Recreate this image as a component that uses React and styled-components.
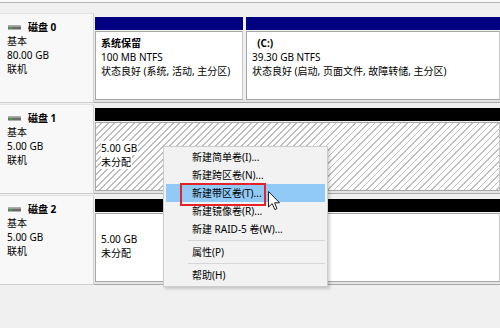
import styled, { createGlobalStyle } from 'styled-components';

const GlobalStyle = createGlobalStyle`
  html, body {
    margin: 0;
    padding: 0;
  }
  body {
    background: #f0f0f0;
    font-family: "Noto Sans", "Noto Sans CJK SC", sans-serif;
    font-size: 10px;
    color: #000;
  }
`;

const disks = [
  {
    name: '磁盘 0',
    size: '80.00 GB',
    parts: [
      { bar: '#000080', width: 148, title: '系统保留', lines: ['100 MB NTFS', '状态良好 (系统, 活动, 主分区)'] },
      { bar: '#000080', title: '\u00a0\u00a0(C:)', lines: ['39.30 GB NTFS', '状态良好 (启动, 页面文件, 故障转储, 主分区)'] },
    ],
  },
  {
    name: '磁盘 1',
    size: '5.00 GB',
    parts: [{ bar: '#000', hatch: true, lines: ['5.00 GB', '未分配'] }],
  },
  {
    name: '磁盘 2',
    size: '5.00 GB',
    parts: [{ bar: '#000', lines: ['5.00 GB', '未分配'] }],
  },
];

const menuItems = [
  '新建简单卷(I)...',
  '新建跨区卷(N)...',
  '新建带区卷(T)...',
  '新建镜像卷(R)...',
  '新建 RAID-5 卷(W)...',
  '-',
  '属性(P)',
  '-',
  '帮助(H)',
];

const DiskIcon = () => (
  <svg width="13" height="5" viewBox="0 0 13 5">
    <rect x="0" y="0.5" width="13" height="4" rx="0.5" fill="#6a6a6a" />
    <rect x="0" y="0.5" width="13" height="1.3" fill="#a8a8a8" />
    <rect x="1" y="2.2" width="3" height="1.4" fill="#3fae3f" />
  </svg>
);

const Cursor = () => (
  <svg width="13" height="20" viewBox="0 0 13 20">
    <path
      d="M0.5 0.5 L0.5 16 L4.2 12.6 L6.8 18.6 L9 17.6 L6.5 11.8 L11.5 11.8 Z"
      fill="#fff"
      stroke="#222"
      strokeWidth="1"
      strokeLinejoin="round"
    />
  </svg>
);

export default function App() {
  return (
    <Page>
      <GlobalStyle />
      <TopStrip />
      <DiskList>
        {disks.map((d) => (
          <DiskRow key={d.name}>
            <DiskLabel>
              <DiskName>
                <DiskIcon />
                <b>{d.name}</b>
              </DiskName>
              <div>基本</div>
              <div>{d.size}</div>
              <div>联机</div>
            </DiskLabel>
            <Volumes>
              {d.parts.map((p, i) => (
                <Partition key={i} $width={p.width}>
                  <PartBar $color={p.bar} />
                  <PartBody $hatch={p.hatch} $pad={p.title ? 4 : 18}>
                    {p.title && <PartTitle>{p.title}</PartTitle>}
                    {p.lines.map((l) => (
                      <div key={l}>
                        <TextChip $hatch={p.hatch}>{l}</TextChip>
                      </div>
                    ))}
                  </PartBody>
                </Partition>
              ))}
            </Volumes>
          </DiskRow>
        ))}
      </DiskList>

      <Menu>
        {menuItems.map((m, i) =>
          m === '-' ? (
            <MenuSep key={i} />
          ) : (
            <MenuItem key={i} $active={i === 2}>
              {m}
            </MenuItem>
          )
        )}
      </Menu>
      <RedMark />
      <CursorWrap>
        <Cursor />
      </CursorWrap>
    </Page>
  );
}

const Page = styled.div`
  position: relative;
  width: 500px;
  height: 328px;
  overflow: hidden;
  background: #f0f0f0;
`;

const TopStrip = styled.div`
  height: 2px;
  background: #f8f8f8;
  border-bottom: 1px solid #b4b4b4;
`;

const DiskList = styled.div`
  padding-top: 10px;
  display: flex;
  flex-direction: column;
  gap: 1px;
`;

const DiskRow = styled.div`
  display: flex;
  height: 90px;
`;

const DiskLabel = styled.div`
  width: 94px;
  box-sizing: border-box;
  background: #f8f8f8;
  border-top: 1px solid #e2e2e2;
  border-right: 1px solid #cfcfcf;
  border-bottom: 1px solid #cfcfcf;
  padding: 6px 0 0 7px;
  line-height: 14px;
`;

const DiskName = styled.div`
  display: flex;
  align-items: center;
  gap: 7px;
  margin-left: 1px;
  b {
    font-weight: 700;
  }
`;

const Volumes = styled.div`
  flex: 1;
  display: flex;
  gap: 3px;
  padding: 4px 0 2px 1px;
  border-bottom: 1px solid #a9a9a9;
  box-shadow: inset 0 -3px 0 #e4e4e4;
`;

const Partition = styled.div`
  display: flex;
  flex-direction: column;
  ${(p) => (p.$width ? `width: ${p.$width}px;` : 'flex: 1;')}
`;

const PartBar = styled.div`
  height: 13px;
  background: ${(p) => p.$color};
`;

const PartBody = styled.div`
  flex: 1;
  margin-top: 1px;
  border: 1px solid #a6a6a6;
  border-right-color: #c8c8c8;
  padding: ${(p) => p.$pad}px 0 0 5px;
  line-height: 14px;
  background: ${(p) =>
    p.$hatch
      ? 'repeating-linear-gradient(135deg, #ffffff 0 3.4px, #bdbdbd 3.4px 4.6px)'
      : '#ffffff'};
`;

const PartTitle = styled.div`
  font-weight: 700;
`;

const TextChip = styled.span`
  background: ${(p) => (p.$hatch ? '#fff' : 'transparent')};
  padding-right: 1px;
`;

const Menu = styled.div`
  position: absolute;
  left: 163px;
  top: 146px;
  width: 165px;
  box-sizing: border-box;
  background: #f2f2f2;
  border: 1px solid #cccccc;
  box-shadow: 2px 2px 3px rgba(0, 0, 0, 0.18);
  padding: 1px 2px 2px;
`;

const MenuItem = styled.div`
  height: 18px;
  line-height: 18px;
  padding-left: 26px;
  white-space: nowrap;
  background: ${(p) => (p.$active ? '#91c9f7' : 'transparent')};
`;

const MenuSep = styled.div`
  height: 1px;
  background: #d7d7d7;
  margin: 2px 0 2px 22px;
`;

const RedMark = styled.div`
  position: absolute;
  left: 180px;
  top: 183px;
  width: 86px;
  height: 23px;
  box-sizing: border-box;
  border: 2px solid #e3242b;
`;

const CursorWrap = styled.div`
  position: absolute;
  left: 268px;
  top: 191px;
  line-height: 0;
`;
